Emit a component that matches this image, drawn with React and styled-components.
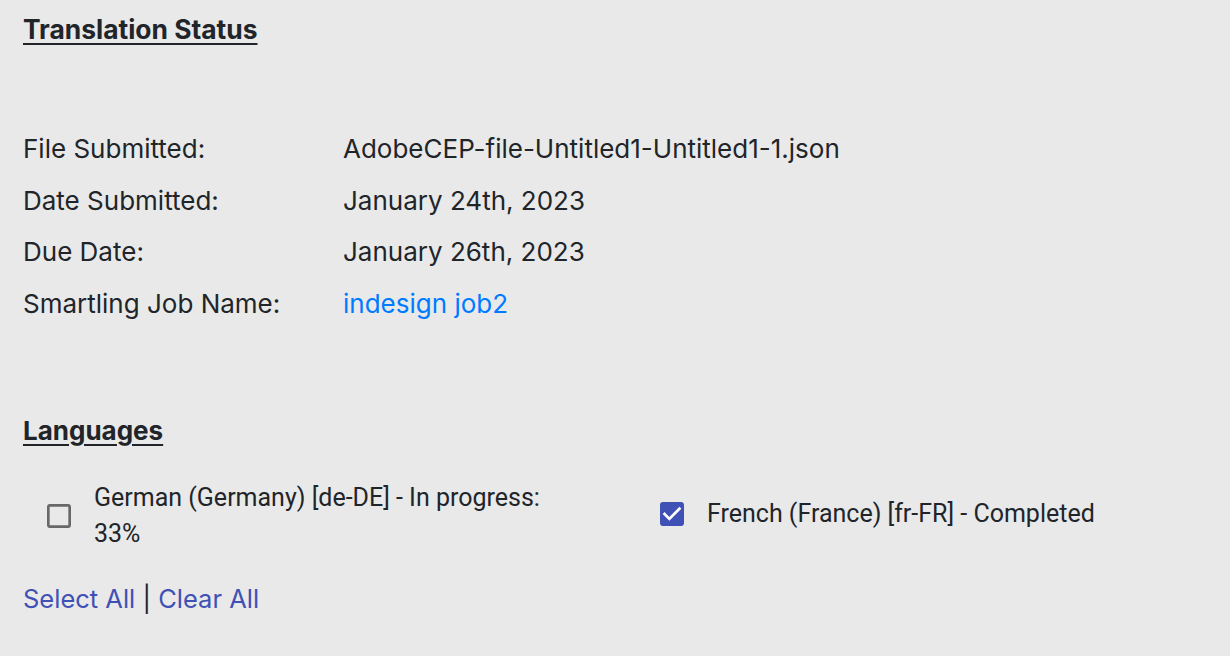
import React from "react";
import styled, { createGlobalStyle } from "styled-components";

const Global = createGlobalStyle`
  html, body { margin: 0; padding: 0; background: #e9e9e9; }
  body { font-family: Inter, "Noto Sans", sans-serif; color: #212529; }
`;

const Page = styled.div`
  padding: 14px 23px 0 23px;
  min-height: 656px;
  box-sizing: border-box;
`;

const Heading = styled.h2`
  margin: 0;
  font-family: Inter, sans-serif;
  font-size: ${(p) => p.$size || 26}px;
  line-height: 31px;
  font-weight: 700;
  text-decoration: underline;
  text-underline-offset: 4px;
  text-decoration-thickness: 2px;
  color: #212529;
  display: inline-block;
`;

const Details = styled.div`
  margin-top: 88px;
  display: flex;
  flex-direction: column;
  gap: 20.5px;
`;

const Row = styled.div`
  display: grid;
  grid-template-columns: 320px 1fr;
  font-size: 26px;
  line-height: 31px;
`;

const Label = styled.div`
  color: #212529;
`;

const Value = styled.div`
  color: #212529;
`;

const Link = styled.a`
  color: #007bff;
  text-decoration: none;
  cursor: pointer;
`;

const LangSection = styled.section`
  margin-top: 96px;
`;

const LangGrid = styled.div`
  margin-top: 34px;
  display: grid;
  grid-template-columns: 613px 1fr;
  font-family: Roboto, sans-serif;
`;

const Option = styled.label`
  display: flex;
  align-items: center;
  gap: 19px;
  padding-left: 20px;
  cursor: pointer;
`;

const Icon = styled.svg`
  flex: none;
  display: block;
  width: 32px;
  height: 32px;
  margin-top: ${(p) => (p.$checked ? "-3px" : "0")};
  fill: ${(p) => (p.$checked ? "#3f51b5" : "#686868")};
`;

const OptionText = styled.span`
  font-size: 25px;
  line-height: 36px;
  max-width: 480px;
  color: #212529;
  margin-top: ${(p) => (p.$single ? "-3px" : "0")};
`;

const Actions = styled.div`
  margin-top: 31px;
  font-family: Inter, sans-serif;
  font-size: 25.5px;
  line-height: 31px;
  color: #212529;
`;

const ActionLink = styled.a`
  color: #3f51b5;
  text-decoration: none;
  cursor: pointer;
`;

function Check({ checked }) {
  return (
    <Icon $checked={checked} viewBox="0 0 24 24" aria-hidden="true">
      {checked ? (
        <>
          <rect x="5" y="5" width="14" height="14" fill="#fff" />
          <path d="M19 3H5c-1.11 0-2 .9-2 2v14c0 1.1.89 2 2 2h14c1.11 0 2-.9 2-2V5c0-1.1-.89-2-2-2zm-9 14l-5-5 1.41-1.41L10 14.17l7.59-7.59L19 8l-9 9z" />
        </>
      ) : (
        <path d="M19 5v14H5V5h14m0-2H5c-1.1 0-2 .9-2 2v14c0 1.1.9 2 2 2h14c1.1 0 2-.9 2-2V5c0-1.1-.9-2-2-2z" />
      )}
    </Icon>
  );
}

export default function App() {
  return (
    <>
      <Global />
      <Page>
        <Heading $size={26.4}>Translation Status</Heading>
        <Details>
          <Row><Label>File Submitted:</Label><Value>AdobeCEP-file-Untitled1-Untitled1-1.json</Value></Row>
          <Row><Label>Date Submitted:</Label><Value>January 24th, 2023</Value></Row>
          <Row><Label>Due Date:</Label><Value>January 26th, 2023</Value></Row>
          <Row><Label>Smartling Job Name:</Label><Value><Link>indesign job2</Link></Value></Row>
        </Details>
        <LangSection>
          <Heading>Languages</Heading>
          <LangGrid>
            <Option>
              <Check checked={false} />
              <OptionText>German (Germany) [de-DE] - In progress: 33%</OptionText>
            </Option>
            <Option>
              <Check checked />
              <OptionText $single>French (France) [fr-FR] - Completed</OptionText>
            </Option>
          </LangGrid>
          <Actions>
            <ActionLink>Select All</ActionLink> | <ActionLink>Clear All</ActionLink>
          </Actions>
        </LangSection>
      </Page>
    </>
  );
}
